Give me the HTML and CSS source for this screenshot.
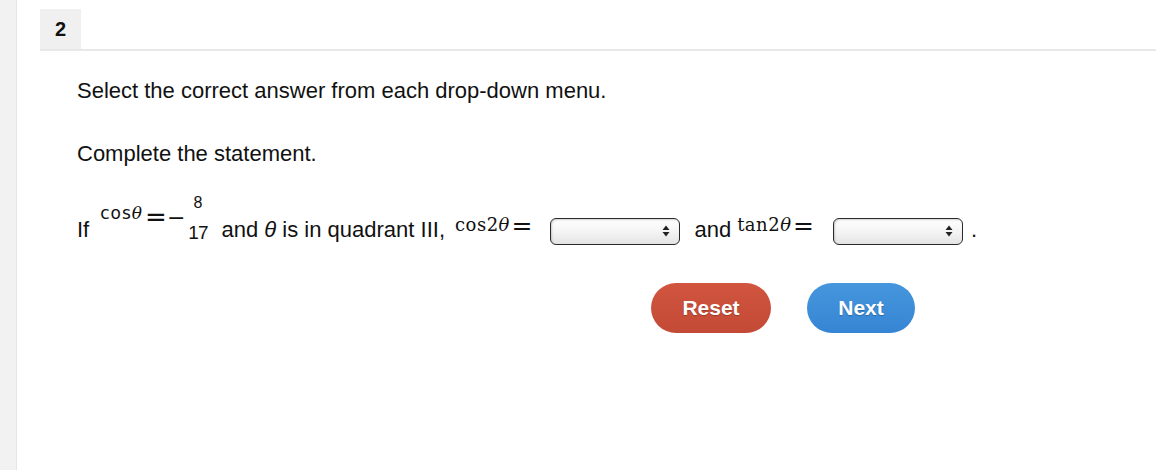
FILE: index.html
```html
<!DOCTYPE html>
<html>
<head>
<meta charset="utf-8">
<link rel="stylesheet" href="styles.css">
</head>
<body>
<div class="page">
  <div class="rail"></div>
  <main class="main">
    <div class="header">
      <div class="qnum">2</div>
    </div>
    <div class="content">
      <p class="instr">Select the correct answer from each drop-down menu.</p>
      <p class="instr second">Complete the statement.</p>
      <div class="statement"><span class="txt">If</span><span class="cos1">cos<i class="th">θ</i></span><span class="eq1">=</span><span class="minus">−</span><span class="frac"><span class="num">8</span><span class="den">17</span></span><span class="txt t2">and <i class="thsans">θ</i> is in quadrant III,</span><span class="m2">cos2<i class="th">θ</i></span><span class="eq2">=</span><span class="sel"><svg class="arrows" width="8" height="12" viewBox="0 0 8 12"><path d="M4 0.5 L7.5 5 L0.5 5 Z M4 11.5 L7.5 7 L0.5 7 Z" fill="#222"/></svg></span><span class="txt t3">and</span><span class="m2 m3">tan2<i class="th">θ</i></span><span class="eq2">=</span><span class="sel sel2"><svg class="arrows" width="8" height="12" viewBox="0 0 8 12"><path d="M4 0.5 L7.5 5 L0.5 5 Z M4 11.5 L7.5 7 L0.5 7 Z" fill="#222"/></svg></span><span class="txt dot">.</span></div>
      <div class="buttons">
        <button class="btn reset">Reset</button>
        <button class="btn next">Next</button>
      </div>
    </div>
  </main>
</div>
</body>
</html>
```
FILE: styles.css
```css
html, body {
  margin: 0;
  padding: 0;
  background: #ffffff;
}
body {
  font-family: "Liberation Sans", Arial, sans-serif;
  color: #111;
}
.page {
  display: flex;
  min-height: 470px;
}
.rail {
  width: 16px;
  flex: none;
  background: #f2f2f2;
  border-right: 1px solid #e6e6e6;
}
.main {
  flex: 1;
  padding-left: 23px;
  padding-top: 9px;
}
.header {
  border-bottom: 2px solid #e8e8e8;
  display: flex;
}
.qnum {
  width: 41px;
  height: 40px;
  background: #f0f0f0;
  font-weight: bold;
  font-size: 20px;
  display: flex;
  align-items: center;
  justify-content: center;
  color: #111;
}
.content {
  padding-left: 37px;
}
.instr {
  margin: 27px 0 0 0;
  font-size: 22px;
  line-height: 26px;
}
.instr.second {
  margin-top: 37px;
}
.statement {
  margin-top: 48px;
  font-size: 22px;
  line-height: 26px;
  white-space: nowrap;
  height: 40px;
}
.statement > span {
  display: inline-block;
  vertical-align: baseline;
}
.txt {
  white-space: pre;
}
.cos1 {
  font-family: "DejaVu Sans", sans-serif;
  font-size: 17px;
  letter-spacing: 1px;
  color: #111;
  margin-left: 11px;
  position: relative;
  top: -18px;
}
.th {
  font-family: "DejaVu Serif", serif;
  font-style: italic;
  letter-spacing: 0;
}
.cos1 .th {
  font-size: 17px;
}
.eq1 {
  font-family: "DejaVu Sans", sans-serif;
  font-size: 26px;
  margin-left: 3px;
  position: relative;
  top: -11px;
  color: #111;
}
.minus {
  font-family: "DejaVu Sans", sans-serif;
  font-size: 22px;
  position: relative;
  top: -12px;
  color: #111;
}
.statement > .frac {
  display: inline-flex;
  flex-direction: column;
  align-items: center;
  margin-left: 3px;
  color: #111;
  font-family: "Liberation Sans", Arial, sans-serif;
  position: relative;
  top: -29px;
}
.num {
  font-size: 16px;
  line-height: 14px;
}
.den {
  font-size: 19px;
  line-height: 20px;
  letter-spacing: -1px;
  padding-top: 13px;
}
.t2 {
  margin-left: 14px;
}
.thsans {
  font-family: "Liberation Sans", Arial, sans-serif;
  font-style: italic;
}
.m2 {
  font-family: "DejaVu Serif", serif;
  font-size: 18px;
  letter-spacing: 0.5px;
  color: #111;
  margin-left: 10px;
  position: relative;
  top: -6px;
}
.m3 {
  margin-left: 6px;
}
.m2 .th {
  font-size: 18px;
}
.eq2 {
  font-family: "DejaVu Sans", sans-serif;
  font-size: 25px;
  margin-left: 2px;
  position: relative;
  top: -3px;
  color: #111;
}
.statement > .sel {
  width: 130px;
  height: 27px;
  box-sizing: border-box;
  border: 1.5px solid #2a2a2a;
  border-radius: 6px;
  background: linear-gradient(to bottom, #ffffff 0%, #f3f3f3 55%, #e4e4e4 100%);
  position: relative;
  vertical-align: middle;
  margin-left: 18px;
  box-shadow: inset 1px 1px 2px rgba(0,0,0,0.18);
}
.statement > .sel2 {
  margin-left: 19px;
}
.arrows {
  position: absolute;
  right: 9px;
  top: 6.5px;
}
.t3 {
  margin-left: 14px;
}
.dot {
  margin-left: 8px;
}
.buttons {
  display: flex;
  gap: 36px;
  margin-top: 28px;
  padding-left: 574px;
}
.btn {
  height: 50px;
  border: none;
  border-radius: 25px;
  color: #fff;
  font-family: "Liberation Sans", Arial, sans-serif;
  font-weight: bold;
  font-size: 21px;
  text-shadow: 0 1px 1px rgba(0,0,0,0.25);
  padding: 0;
  cursor: pointer;
}
.reset {
  width: 120px;
  background: linear-gradient(to bottom, #d1553f 0%, #c34a36 100%);
}
.next {
  width: 108px;
  background: linear-gradient(to bottom, #4696dd 0%, #3585d4 100%);
}
```
